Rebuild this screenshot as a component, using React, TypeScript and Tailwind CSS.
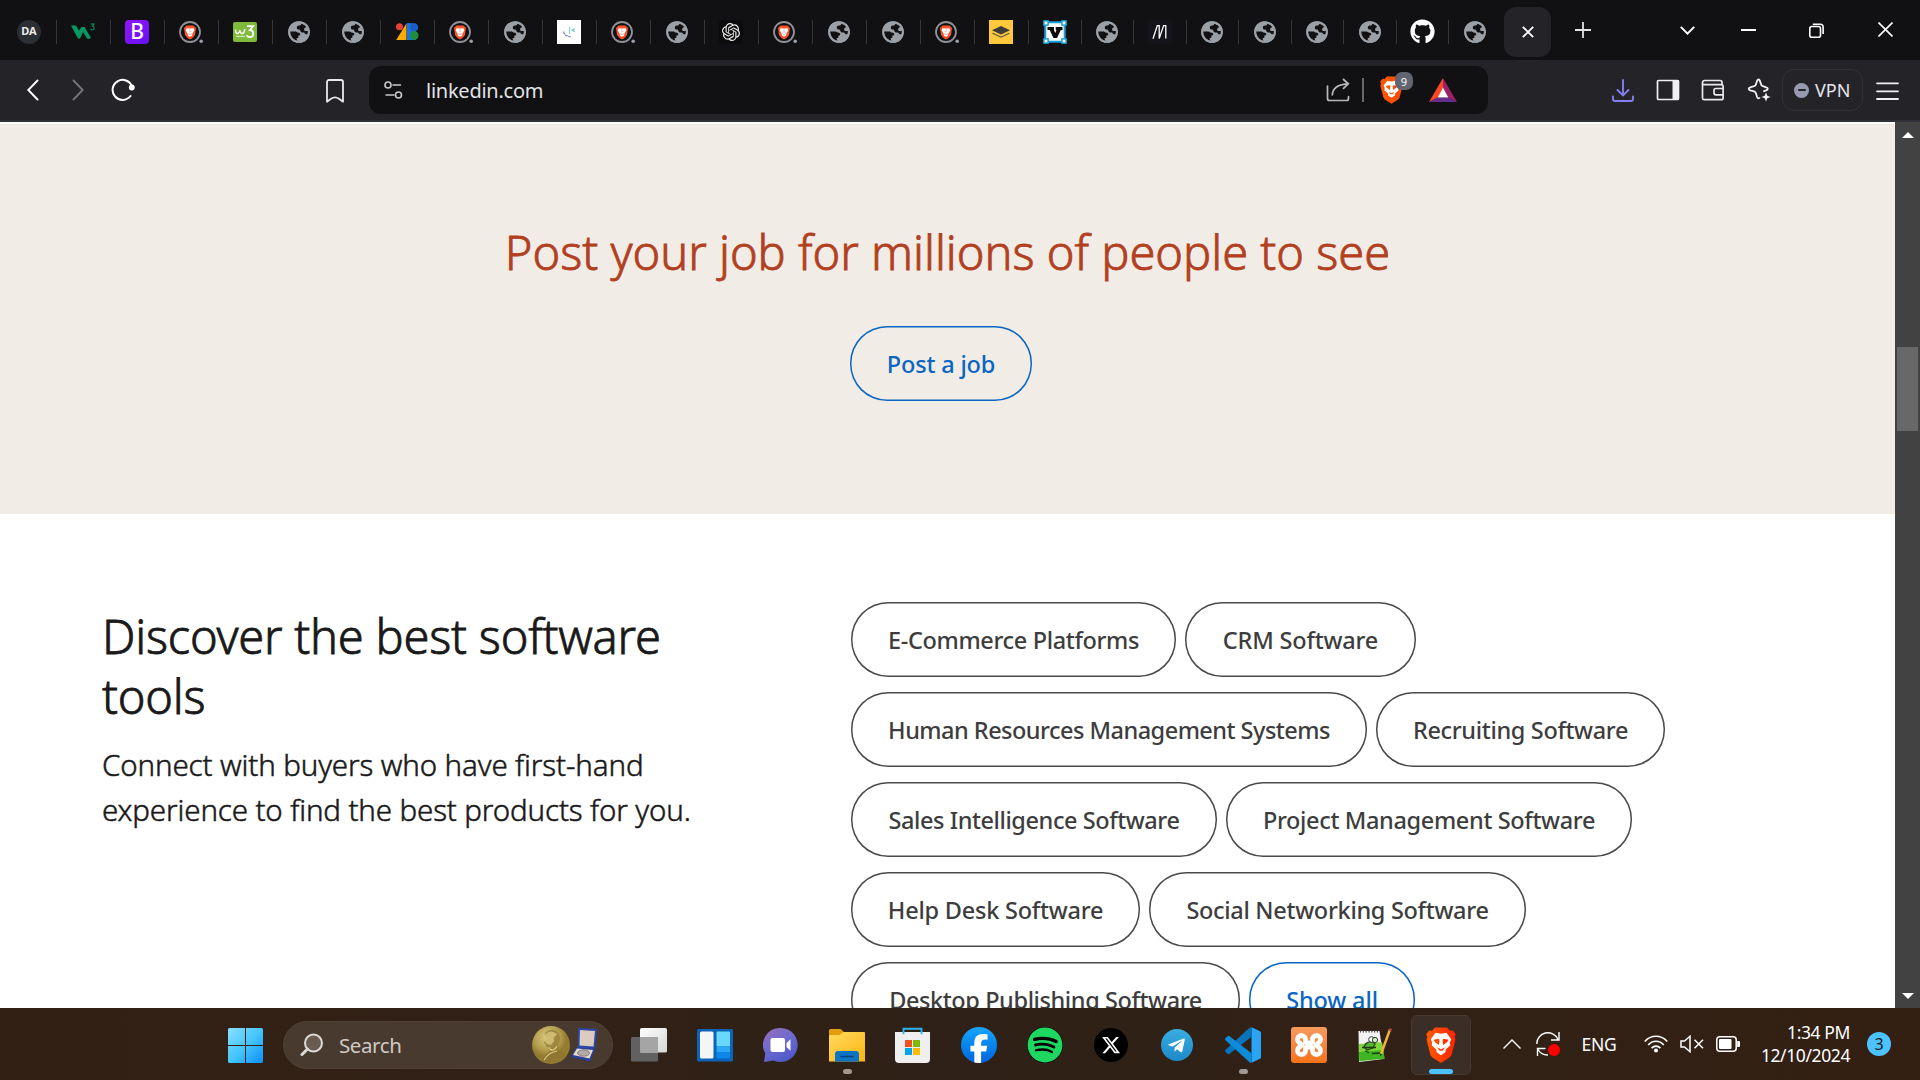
import React from "react";
import { SiOpenai } from "react-icons/si";
import { FaGithub, FaSpotify, FaTelegramPlane } from "react-icons/fa";
import { FaXTwitter, FaFacebookF } from "react-icons/fa6";

/* ---------- tab favicons ---------- */

const Globe = () => (
  <svg className="h-6 w-6" viewBox="0 0 24 24">
    <circle cx="12" cy="12" r="10.8" fill="#9aa0a6" />
    <path
      d="M3 11.4h5.4c1.2 0 1.6.9 2.6 1.2 1.2.3 2.2.5 2.2 1.7 0 1-.6 1.3-1.9 1.4v2.2H9.6c.2 1.2.4 2.3 1.6 3.1C6.5 20.7 3.1 16.8 3 12.2z"
      fill="#111113"
    />
    <path
      d="M14.3 3.7c-.1 1.1-.8 1.900-2 1.900h-.3c-1.300 0-2.200.9-2.200 2.100 0 1.100.9 1.900 2 1.900.9 0 1.300.5 1.500 1.200.3 1 1 1.800 2.300 1.800h.9c.8 0 1.100.5 1.500 1.100.5.700 1.800.8 3.300.3v-2.800c-.5-.2-1-.2-1.500-.2h-1.200c-.9 0-1.500-.7-1.500-1.600 0-.8.600-1.300 1.100-1.600.7-.4.9-.9.8-1.700-.1-1-1.900-2-4.700-2.400z"
      fill="#111113"
    />
    <circle cx="12" cy="12" r="9.800" fill="none" stroke="#9aa0a6" strokeWidth="2" />
  </svg>
);

const BraveTab = () => (
  <svg className="h-6 w-6" viewBox="0 0 24 24">
    <circle cx="11" cy="12" r="10" fill="#111113" stroke="#8f9297" strokeWidth="1.8" />
    <path d="M7.600 5.600h6.800L17 8l-1 7-2.500 3-2.500 1.500L8.500 18 6 15 5 8z" fill="#fb542b" />
    <path d="M7.500 8.200l3.500.4 3.500-.4.8 2-1.800 3.300-.6 2.200-1.900 1-1.900-1-.6-2.200-1.800-3.300z" fill="#fff" />
    <path d="M11 9.500v2.700M9.300 13.800l1.700.7 1.700-.7" stroke="#fb8a68" strokeWidth=".8" fill="none" />
    <circle cx="22.200" cy="21.300" r="1.800" fill="#9aa0a6" />
  </svg>
);

const DA = () => (
  <div className="flex h-6 w-6 items-center justify-center rounded-full bg-[#2b2e33] font-['Noto_Sans',sans-serif] text-[11px] font-bold text-[#ececec]">
    DA
  </div>
);

const W3 = () => (
  <svg className="h-6 w-6" viewBox="0 0 24 24">
    <path d="M0 5.500h4.800l3.200 5 2.500-3.500h3l6.300 10.500c-1 2-3.600 1.800-4.600-.3l-3.200-5.200L9 18.500H7z" fill="#059862" />
    <path d="M19.800 4h3.400l-1.700 2.200c2.300 0 2.300 3.600-.2 3.600-.8 0-1.400-.3-1.700-.9" fill="none" stroke="#059862" strokeWidth="1.100" />
  </svg>
);

const Bootstrap = () => (
  <div className="flex h-6 w-6 items-center justify-center rounded-[4px] bg-linear-to-br from-[#9013fe] to-[#6610f2] font-['Noto_Sans',sans-serif] text-[21px] leading-none font-medium text-white">
    B
  </div>
);

const W3Green = () => (
  <div className="flex h-5 w-6 items-center justify-center rounded-[2px] bg-[#7fba3c]">
    <svg className="h-[18px] w-[22px]" viewBox="0 0 22 18" fill="none" stroke="#fff">
      <path d="M1.500 6.500c0 4 1.500 4.500 3 3.500 1-.7 1.300-2 1.300-3 0 3.500 2.500 4.500 4 2.500.7-1 .9-2 .9-3.500" strokeWidth="1.500" />
      <path d="M13 3.200h6l-3.200 4c4.700.2 4.500 7 .2 7-1.700 0-2.800-.8-3.300-2" strokeWidth="1.800" />
      <path d="M2 13.300h9" strokeWidth="1" strokeOpacity=".8" />
    </svg>
  </div>
);

const ZB = () => (
  <svg className="h-6 w-6" viewBox="0 0 24 24">
    <circle cx="4.500" cy="6.800" r="3.500" fill="#ea4335" />
    <path d="M11.500 3.300v16.700H1.200z" fill="#f9ab00" />
    <path d="M12 3.300h7a4 4 0 0 1 1.800 7.600L21 20h-9z" fill="#1a73e8" />
    <circle cx="18.800" cy="7.200" r="3.900" fill="#174ea6" fillOpacity=".55" />
    <circle cx="19" cy="15.500" r="4.500" fill="#1e8e3e" />
    <path d="M12 3.300h3.200V20H12z" fill="#1a73e8" />
  </svg>
);

const WhiteFace = () => (
  <svg className="h-6 w-6" viewBox="0 0 24 24">
    <rect width="24" height="24" fill="#fff" />
    <path d="M6.500 11.500c.5 3 3 5 7 5.200" fill="none" stroke="#8587c9" strokeWidth="1.300" strokeDasharray="3 .6" />
    <path d="M12.500 7v7" stroke="#8fd0dd" strokeWidth="1.100" />
    <path d="M17.800 8.800l-2.800 1.500 2.800 1.500" fill="none" stroke="#6cc7c9" strokeWidth="1.200" />
  </svg>
);

const GPT = () => (
  <div className="flex h-6 w-6 items-center justify-center rounded-[4px] bg-[#0b0b0b]">
    <SiOpenai className="h-[18px] w-[18px] text-[#ececec]" />
  </div>
);

const YellowStack = () => (
  <svg className="h-6 w-6" viewBox="0 0 24 24">
    <rect width="24" height="24" fill="#ffc83d" />
    <path d="M12 6l9 4.200-9 4.300-9-4.300z" fill="#3f3d38" />
    <path d="M4 12.700l8 3.800 8-3.800 1 .8-9 4.300-9-4.300z" fill="#5a5342" />
  </svg>
);

const VBox = () => (
  <svg className="h-6 w-6" viewBox="0 0 24 24">
    <rect x="2.300" y="2.300" width="19.400" height="19.400" fill="#fff" stroke="#1ba1d8" strokeWidth="2" />
    <path d="M4.500 7H11v3l1.200 3L13.500 10H12.700V7h6.800v3h-1.700l-3.800 8h-3.500l-3.800-8H4.500z" fill="#0b0b0b" />
    <g fill="#fff" stroke="#1ba1d8" strokeWidth="1.500">
      <rect x=".9" y=".9" width="4.200" height="4.200" />
      <rect x="18.900" y=".9" width="4.200" height="4.200" />
      <rect x=".9" y="18.900" width="4.200" height="4.200" />
      <rect x="18.900" y="18.900" width="4.200" height="4.200" />
    </g>
  </svg>
);

const MLogo = () => (
  <svg className="h-6 w-6" viewBox="0 0 24 24" fill="none" stroke="#fff" strokeWidth="1.300">
    <rect width="24" height="24" fill="#15141a" stroke="none" />
    <path d="M5 18.700L9.300 5.600h1.900v13L15.600 5.600h2.200v13" />
  </svg>
);

const Github = () => <FaGithub className="h-[25px] w-[25px] text-white" />;

const wideTabs = [
  DA, W3, Bootstrap, BraveTab, W3Green, Globe, Globe, ZB, BraveTab, Globe,
  WhiteFace, BraveTab, Globe, GPT, BraveTab, Globe, Globe, BraveTab, YellowStack,
];
const narrowTabs = [VBox, Globe, MLogo, Globe, Globe, Globe, Globe, Github];

const Separator = () => <span className="h-6 w-px bg-[#37373b]" />;

function TabStrip() {
  return (
    <div className="flex h-[60px] shrink-0 items-center bg-[#111113] pl-[3px] pt-[3px]">
      {wideTabs.map((Icon, i) => (
        <div key={i} className="flex h-12 w-[54px] shrink-0 items-center">
          <span className="flex flex-1 justify-center pr-[1px]"><Icon /></span>
          <Separator />
        </div>
      ))}
      {narrowTabs.map((Icon, i) => (
        <div key={i} className="flex h-12 w-[52.5px] shrink-0 items-center">
          <span className="flex flex-1 justify-center"><Icon /></span>
          <Separator />
        </div>
      ))}
      <div className="flex w-[52px] justify-center"><Globe /></div>
      <div className="ml-[3px] flex h-[50px] w-[47px] items-center justify-center rounded-xl bg-[#242428]">
        <svg className="h-3 w-3" viewBox="0 0 12 12" stroke="#fff" strokeWidth="1.900">
          <path d="M.8.8l10.400 10.400M11.200.8L.8 11.200" />
        </svg>
      </div>
      <div className="flex w-[62px] justify-center pb-[3px] pl-[2px]">
        <svg className="h-4 w-4" viewBox="0 0 16 16" stroke="#e2e2e4" strokeWidth="1.800">
          <path d="M8 0v16M0 8h16" />
        </svg>
      </div>
      <div className="flex-1" />
      <div className="flex w-[65px] justify-center pb-[3px]">
        <svg className="h-[9px] w-[15px]" viewBox="0 0 15 9" stroke="#fff" strokeWidth="2" fill="none">
          <path d="M.8.9l6.700 6.700L14.200.9" />
        </svg>
      </div>
      <div className="flex w-14 justify-center pb-1"><span className="h-[2px] w-[15px] bg-white" /></div>
      <div className="flex w-20 justify-center pb-[3px]">
        <svg className="h-[15px] w-[15px]" viewBox="0 0 15 15" stroke="#fff" strokeWidth="1.600" fill="none">
          <rect x=".8" y="3.500" width="10.700" height="10.700" rx="2" />
          <path d="M3.800 1.200h7.500a2.800 2.800 0 0 1 2.800 2.800v7" />
        </svg>
      </div>
      <div className="mr-[5px] flex w-[59px] justify-center pb-1">
        <svg className="h-[15px] w-[15px]" viewBox="0 0 15 15" stroke="#fff" strokeWidth="1.600">
          <path d="M.5.5l14 14M14.500.5l-14 14" />
        </svg>
      </div>
    </div>
  );
}

/* ---------- toolbar ---------- */

function BraveLion({ className, from, to, id }: { className: string; from: string; to: string; id: string }) {
  return (
    <svg className={className} viewBox="0 0 30 36">
      <defs>
        <linearGradient id={id} x1="0" x2="1">
          <stop offset="0" stopColor={from} />
          <stop offset="1" stopColor={to} />
        </linearGradient>
      </defs>
      <path
        d="M9 .5h12l3 3.300 2.800-.4L29.700 7l-1 3 .8 2.400-3.800 14.800c-.4 1.500-1.300 2.700-2.500 3.600L15 36l-8.200-5.200c-1.200-.9-2.100-2.100-2.500-3.600L.5 12.400 1.300 10 .3 7l2.900-3.600 2.800.4z"
        fill={`url(#${id})`}
      />
      <path
        d="M9.500 5.800l5.500 1 5.500-1 4.800 6.400-1.400 3.300.3 3.100-4.500 4-.3 2.700-4.400 2.900-4.400-2.900-.3-2.700-4.500-4 .3-3.100-1.400-3.300z"
        fill="#fff"
      />
      <path
        d="M7.500 12.700l4.800-.9 1.200 1-.6 5.100-3.900-2.700zM22.500 12.700l-4.800-.9-1.200 1 .6 5.100 3.900-2.700zM11 20.300l4 1.900 4-1.900-2.500 3.400h-3z"
        fill={`url(#${id})`}
      />
    </svg>
  );
}

function Toolbar() {
  return (
    <div className="flex h-[62px] shrink-0 items-center border-b-2 border-[#313036] bg-[#242428] text-[#f0f0f3]">
      <div className="flex w-[66px] justify-center">
        <svg className="h-[22px] w-3" viewBox="0 0 12 22" fill="none" stroke="#fff" strokeWidth="1.900" strokeLinecap="round">
          <path d="M10.500 1.500L1.300 11l9.200 9.500" />
        </svg>
      </div>
      <div className="flex w-6 justify-center">
        <svg className="h-[22px] w-3" viewBox="0 0 12 22" fill="none" stroke="#74747a" strokeWidth="1.900" strokeLinecap="round">
          <path d="M1.500 1.500L10.700 11l-9.200 9.500" />
        </svg>
      </div>
      <div className="flex w-[65px] justify-center">
        <svg className="h-6 w-6" viewBox="0 0 24 24" fill="none" stroke="#fff" strokeWidth="2" strokeLinecap="round">
          <path d="M21 8.500A10 10 0 1 0 19.500 18" />
          <circle cx="20.800" cy="9.500" r="2.900" fill="#fff" stroke="none" />
        </svg>
      </div>
      <div className="w-[145px]" />
      <div className="flex w-[69px] justify-center">
        <svg className="mt-[1px] h-6 w-[18px]" viewBox="0 0 18 24" fill="none" stroke="#e9e9ec" strokeWidth="1.800" strokeLinejoin="round">
          <path d="M3 1h12a2 2 0 0 1 2 2v19.700l-4-2.900c-2.500-1.700-5.500-1.700-8 0l-4 2.900V3a2 2 0 0 1 2-2z" />
        </svg>
      </div>

      <div className="flex h-12 w-[1119px] shrink-0 items-center rounded-xl bg-[#111113]">
        <div className="flex w-12 justify-center">
          <svg className="h-[18px] w-[19px]" viewBox="0 0 19 18" fill="none" stroke="#c9c9cc" strokeWidth="1.600">
            <circle cx="4" cy="4" r="3" />
            <path d="M9 4h7.500M2 14h8" strokeLinecap="round" />
            <circle cx="14.500" cy="14" r="3" />
          </svg>
        </div>
        <div className="ml-[9px] flex-1 pt-[2px] font-['Noto_Sans',sans-serif] text-[20px] tracking-[-0.25px] text-[#e3e3e6]">linkedin.com</div>
        <div className="flex w-12 justify-center">
          <svg className="h-6 w-6" viewBox="0 0 24 24" fill="none" stroke="#b9b9bc" strokeWidth="1.700">
            <path d="M1.500 8v12.500a2 2 0 0 0 2 2h17a2 2 0 0 0 2-2v-1.800" strokeLinecap="round" />
            <path d="M6.300 17.500c0-7 4.500-11 15-11.700M17 1l5.300 4.800-5.300 5" />
          </svg>
        </div>
        <span className="h-6 w-[2px] bg-[#69696d]" />
        <div className="relative ml-3 flex w-11 pl-1">
          <BraveLion id="shield" className="h-7 w-[23px]" from="#ff5500" to="#ff4a00" />
          <span className="absolute -top-[4px] left-[19px] flex h-[18px] w-[18px] items-center justify-center rounded-[7px] bg-[#62656f] font-['Noto_Sans',sans-serif] text-[11px] leading-none text-white">
            9
          </span>
        </div>
        <div className="mr-[23px] flex w-[45px] justify-center">
          <svg className="h-6 w-7" viewBox="0 0 28 24">
            <path d="M14 0L0 24l9-4.500 5-10z" fill="#ff4724" />
            <path d="M14 0l14 24-9-4.500-5-10z" fill="#9e1f63" />
            <path d="M0 24h28l-9-4.500H9z" fill="#662d91" />
            <path d="M14 9.500l5.300 10H8.700z" fill="#fff" />
          </svg>
        </div>
      </div>

      <div className="w-[112px]" />
      <div className="flex w-[46px] justify-center">
        <svg className="h-[23px] w-[22px]" viewBox="0 0 22 23" fill="none" stroke="#8280f0" strokeWidth="1.900" strokeLinecap="round">
          <path d="M11 1v15M5.500 11l5.500 5.500 5.500-5.500M1 17.500V20a2 2 0 0 0 2 2h16a2 2 0 0 0 2-2v-2.500" />
        </svg>
      </div>
      <div className="flex w-[43px] justify-center">
        <svg className="h-[22px] w-6" viewBox="0 0 24 22">
          <rect x="1.500" y="1.500" width="21" height="19" rx="1" fill="none" stroke="#f0f0f3" strokeWidth="1.700" />
          <rect x="16.500" y="1" width="6.500" height="20" fill="#f0f0f3" />
        </svg>
      </div>
      <div className="flex w-12 justify-center">
        <svg className="h-[22px] w-6" viewBox="0 0 24 22" fill="none" stroke="#e9e9ec" strokeWidth="1.700">
          <path d="M1.500 3v16a1.800 1.800 0 0 0 1.800 1.700h17a1.800 1.800 0 0 0 1.800-1.800V7.500a1.800 1.800 0 0 0-1.800-1.800H3.300A1.800 1.800 0 0 1 1.500 3.500 2 2 0 0 1 3.500 1.500h15.500a2 2 0 0 1 2 2v2" />
          <path d="M22.500 9.500h-7.500a2 2 0 0 0-2 2v2.300a2 2 0 0 0 2 2h7.500" />
        </svg>
      </div>
      <div className="flex w-[43px] justify-center">
        <svg className="h-6 w-6" viewBox="0 0 24 24" fill="none" stroke="#f0f0f3" strokeWidth="1.800" strokeLinejoin="round">
          <path d="M11.500 1.500c.8 0 1.200.7 1.500 1.600l1.100 3.300c.3 1 .8 1.500 1.800 1.800l3.300 1.100c.9.300 1.600.7 1.600 1.500s-.7 1.200-1.600 1.500l-3 1M11.500 1.500c-.8 0-1.200.7-1.500 1.600L8.900 6.400c-.3 1-.8 1.500-1.800 1.800L3.300 9.300c-.9.300-1.600.7-1.600 1.500s.7 1.200 1.600 1.500l3.800 1.100c1 .3 1.500.8 1.800 1.800L10 18.800c.3.900.7 1.600 1.500 1.600s1-.4 1.300-1" />
          <path d="M19 14.500l1.300 3.200 3.200 1.300-3.200 1.300L19 23.500l-1.300-3.200-3.200-1.300 3.200-1.300z" fill="#f0f0f3" stroke="none" />
        </svg>
      </div>
      <div className="ml-[2px] flex h-[42px] w-[81px] items-center gap-[6px] rounded-xl border-[1.500px] border-[#323137] pl-[11px]">
        <span className="flex h-[15px] w-[15px] items-center justify-center rounded-full bg-[#959ab0]">
          <span className="h-[2px] w-2 rounded bg-[#242428]" />
        </span>
        <span className="pb-px font-['Noto_Sans',sans-serif] text-[18px] leading-none text-[#e4e4ee]">VPN</span>
      </div>
      <div className="flex w-[49px] justify-center">
        <svg className="mt-px h-[18px] w-[23px]" viewBox="0 0 23 18" stroke="#f0f0f3" strokeWidth="1.800" strokeLinecap="round">
          <path d="M1 1.300h21M1 9.300h21M1 17h21" />
        </svg>
      </div>
    </div>
  );
}

/* ---------- page ---------- */

const pillBase =
  "flex h-[75px] shrink-0 items-center justify-center rounded-[37px] text-[23.500px] leading-none font-medium whitespace-nowrap ";
const dark = "pt-[3px] text-[#3d3d3d] shadow-[inset_0_0_0_1.5px_#4a4a4a] ";
const blue = "pt-[3px] text-[#0a66c2] shadow-[inset_0_0_0_1.5px_#0a66c2] ";

const rows: { label: string; cls: string }[][] = [
  [
    { label: "E-Commerce Platforms", cls: dark + "w-[325px] tracking-[-0.35px]" },
    { label: "CRM Software", cls: dark + "w-[231px] tracking-[-0.18px]" },
  ],
  [
    { label: "Human Resources Management Systems", cls: dark + "w-[516px] tracking-[-0.52px]" },
    { label: "Recruiting Software", cls: dark + "w-[289px] tracking-[-0.34px]" },
  ],
  [
    { label: "Sales Intelligence Software", cls: dark + "w-[366px] tracking-[-0.42px]" },
    { label: "Project Management Software", cls: dark + "w-[406px] tracking-[-0.35px]" },
  ],
  [
    { label: "Help Desk Software", cls: dark + "w-[289px] tracking-[-0.23px]" },
    { label: "Social Networking Software", cls: dark + "w-[377px] tracking-[-0.3px]" },
  ],
  [
    { label: "Desktop Publishing Software", cls: dark + "w-[389px] tracking-[-0.4px]" },
    { label: "Show all", cls: blue + "w-[166px] tracking-[-0.13px]" },
  ],
];

function Page() {
  return (
    <div className="flex min-h-0 flex-1">
      <main className="flex min-w-0 flex-1 flex-col overflow-hidden bg-white pt-[2px] font-['Noto_Sans','Open_Sans',sans-serif]">
        <section className="flex h-[390px] shrink-0 flex-col items-center bg-[#f1ece6] pt-[98px]">
          <h2 className="text-[47px] leading-[60px] font-light whitespace-nowrap text-[#b24020] [-webkit-text-stroke:0.8px_#b24020]">
            Post your job for millions of people to see
          </h2>
          <button className={pillBase + blue + "mt-[44px] mr-[13px] w-[182px] tracking-[-0.16px]"}>Post a job</button>
        </section>
        <section className="flex shrink-0 pl-[102px]">
          <div className="w-[749px] pt-[92px] text-[#191919]">
            <h2 className="text-[47px] leading-[60px] font-light tracking-[-0.22px] [-webkit-text-stroke:0.8px_#191919]">
              Discover the best software
              <br />
              tools
            </h2>
            <p className="mt-[16px] text-[29.500px] leading-[45px] font-light tracking-[-0.13px] [-webkit-text-stroke:0.5px_#191919]">
              Connect with buyers who have first-hand
              <br />
              experience to find the best products for you.
            </p>
          </div>
          <div className="flex flex-col gap-[15px] pt-[88px]">
            {rows.map((row, i) => (
              <div key={i} className="flex gap-[9px]">
                {row.map((p) => (
                  <button key={p.label} className={pillBase + p.cls}>{p.label}</button>
                ))}
              </div>
            ))}
          </div>
        </section>
      </main>
      <div className="flex w-[25px] flex-col items-center bg-[#424242]">
        <svg className="mt-[10px] h-[6px] w-3" viewBox="0 0 12 6"><path d="M6 0l6 6H0z" fill="#fff" /></svg>
        <div className="mt-[209px] h-[84px] w-[21px] bg-[#686868]" />
        <div className="flex-1" />
        <svg className="mb-[9px] h-[6px] w-3" viewBox="0 0 12 6"><path d="M0 0h12L6 6z" fill="#fff" /></svg>
      </div>
    </div>
  );
}

/* ---------- taskbar ---------- */

const TaskView = () => (
  <svg className="h-9 w-9" viewBox="0 0 36 36">
    <defs>
      <linearGradient id="tv" x1="0" y1="0" x2="1" y2="1"><stop offset="0" stopColor="#fff" /><stop offset="1" stopColor="#d6d6d6" /></linearGradient>
    </defs>
    <rect x="0" y="10" width="27" height="24.500" rx="1.500" fill="#616161" />
    <rect x="9" y="1" width="27" height="24.500" rx="1.500" fill="url(#tv)" />
    <path d="M9 10h18v15.500H9z" fill="#a5a5a5" />
  </svg>
);
const Widgets = () => (
  <svg className="h-9 w-9" viewBox="0 0 36 36">
    <rect x="0" y="2" width="36" height="32.500" rx="1.500" fill="#0d63b5" />
    <rect x="3" y="4.500" width="13.500" height="27" rx="1.500" fill="#f5f5f5" />
    <rect x="19.500" y="4.500" width="13.500" height="15" rx="1" fill="#69d8ff" />
    <rect x="19.500" y="19.500" width="13.500" height="6" fill="#2aa8f5" />
    <rect x="19.500" y="25.500" width="13.500" height="6" fill="#0d86ea" />
  </svg>
);
const Chat = () => (
  <svg className="h-9 w-9" viewBox="0 0 36 36">
    <defs>
      <linearGradient id="ch" x1="0" y1="0" x2=".6" y2="1"><stop offset="0" stopColor="#9a6bb5" /><stop offset=".5" stopColor="#6f6bd0" /><stop offset="1" stopColor="#5059c9" /></linearGradient>
    </defs>
    <path d="M17.500 1a17 17 0 1 1-7 32.400L1 35l1.300-8.500A17 17 0 0 1 17.500 1z" fill="url(#ch)" />
    <rect x="7.500" y="11" width="14.500" height="14" rx="2" fill="#fff" />
    <path d="M23.500 16l4-3.800v11.500l-4-3.800z" fill="#fff" />
  </svg>
);
const Explorer = () => (
  <svg className="h-9 w-9" viewBox="0 0 36 36">
    <defs>
      <linearGradient id="ex" x1="0" y1="0" x2="1" y2="1"><stop offset="0" stopColor="#ffd95e" /><stop offset="1" stopColor="#fbb614" /></linearGradient>
    </defs>
    <path d="M0 3.500A1.500 1.500 0 0 1 1.500 2h10l4 3.500V9H0z" fill="#e29c0c" />
    <path d="M0 8h10.500l4-3H35a1 1 0 0 1 1 1v28.500H0z" fill="url(#ex)" />
    <path d="M6 34.500V27a3 3 0 0 1 3-3h18a3 3 0 0 1 3 3v7.500z" fill="#0c74c4" />
    <path d="M11.500 29.500h13" stroke="#083f78" strokeWidth="1.500" />
  </svg>
);
const Store = () => (
  <svg className="h-9 w-9" viewBox="0 0 36 36">
    <path d="M0 5h35v27a4 4 0 0 1-4 4H4a4 4 0 0 1-4-4z" fill="#efefef" />
    <path d="M8.500 7.300V1.800h18v5.500" fill="none" stroke="#2cb5f0" strokeWidth="1.900" />
    <path d="M10 13h7v7h-7z" fill="#f25022" />
    <path d="M18 13h7v7h-7z" fill="#7fba00" />
    <path d="M10 21h7v7h-7z" fill="#00a4ef" />
    <path d="M18 21h7v7h-7z" fill="#ffb900" />
  </svg>
);
const Facebook = () => (
  <div className="flex h-9 w-9 items-end justify-center overflow-hidden rounded-full bg-linear-to-b from-[#1aa6fb] to-[#0463de]">
    <FaFacebookF className="-mb-px h-[30px] w-[26px] text-white" />
  </div>
);
const Spotify = () => (
  <div className="flex h-9 w-9 items-center justify-center rounded-full bg-black">
    <FaSpotify className="h-9 w-9 text-[#1ed760]" />
  </div>
);
const XLogo = () => (
  <div className="flex h-[34px] w-[34px] items-center justify-center rounded-full bg-black">
    <FaXTwitter className="h-5 w-5 text-white" />
  </div>
);
const Telegram = () => (
  <div className="flex h-8 w-8 items-center justify-center rounded-full bg-linear-to-b from-[#37aee2] to-[#1e88c9]">
    <FaTelegramPlane className="mr-[2px] h-[19px] w-[19px] text-white" />
  </div>
);
const VSCode = () => (
  <svg className="h-9 w-9" viewBox="0 0 36 36">
    <path d="M26.500.3L35 4.200a1.800 1.800 0 0 1 1 1.600v24.400a1.800 1.800 0 0 1-1 1.600l-8.500 4z" fill="#2aa4f4" />
    <path d="M26.500.3v9.500L4.300 26.900a1.500 1.500 0 0 1-1.900-.1L.5 25a1.500 1.500 0 0 1 0-2.200L24.500.8a2.200 2.200 0 0 1 2-.5z" fill="#0873bd" />
    <path d="M26.500 35.700v-9.500L4.300 9.100a1.500 1.500 0 0 0-1.900.1L.5 11a1.500 1.500 0 0 0 0 2.200l24 22a2.200 2.200 0 0 0 2 .5z" fill="#0d8ad8" />
  </svg>
);
const Xampp = () => (
  <div className="flex h-9 w-9 items-center justify-center rounded-[3px] bg-linear-to-b from-[#f79a5c] to-[#f47216]">
    <svg className="h-[26px] w-[30px]" viewBox="0 0 30 26" fill="none" stroke="#fff" strokeWidth="4.800" strokeLinejoin="round" strokeLinecap="round">
      <path d="M11.500 9.500V7.500a4 4 0 1 0-5.500 3.700l2 1.800-2 1.800a4 4 0 1 0 5.500 3.700v-2c0-2 7-2 7 0v2a4 4 0 1 0 5.500-3.700l-2-1.800 2-1.800a4 4 0 1 0-5.500-3.700v2c0 2-7 2-7 0z" />
    </svg>
  </div>
);
const NotepadPP = () => (
  <svg className="h-9 w-9" viewBox="0 0 36 36">
    <path d="M1.500 4h21l4 28-24.500 3z" fill="#f2f2f2" />
    <path d="M2 17l23-2 2.500 16.500L2.300 34z" fill="#7ed63a" />
    <path d="M2 25l24.500-2 1 8.500L2.300 34z" fill="#3cb521" />
    <path d="M3 4.500h18" stroke="#555" strokeWidth="2" strokeDasharray="1.200 1.600" />
    <path d="M7 20c1-4 5-6 9-5l2 2-2 4-6 2z" fill="#58b336" stroke="#1e4a12" strokeWidth="1.200" />
    <circle cx="14.500" cy="12.500" r="2.800" fill="#fff" stroke="#333" />
    <circle cx="18" cy="13" r="2.600" fill="#d8f5c8" stroke="#333" />
    <path d="M5 20.500h14M8 24l4 1.500M15 26.500l8-.5" stroke="#1e3a12" strokeWidth="1.300" />
    <path d="M24 27L33 2.500" stroke="#f0b43c" strokeWidth="2.500" />
    <path d="M33 4l1-2.500" stroke="#b53a4a" strokeWidth="2.500" />
    <path d="M23 29.500l.3-3 1.700.7z" fill="#222" />
  </svg>
);

type TaskApp = { Icon: React.FC; open?: boolean };
const apps: TaskApp[] = [
  { Icon: TaskView }, { Icon: Widgets }, { Icon: Chat }, { Icon: Explorer, open: true }, { Icon: Store },
  { Icon: Facebook }, { Icon: Spotify }, { Icon: XLogo }, { Icon: Telegram }, { Icon: VSCode, open: true },
  { Icon: Xampp }, { Icon: NotepadPP },
];

const Medal = () => (
  <svg className="h-[38px] w-[38px]" viewBox="0 0 38 38">
    <defs>
      <radialGradient id="md" cx=".4" cy=".3"><stop offset="0" stopColor="#dccb83" /><stop offset=".7" stopColor="#b39b4b" /><stop offset="1" stopColor="#947b30" /></radialGradient>
    </defs>
    <circle cx="19" cy="19" r="19" fill="url(#md)" />
    <path d="M13 7c3-4 11-5 14 1 1.500 4 1 7-1 10l1 6c4 2 6 4 5 7-6 6-15 7-22 3 2-4 5-7 9-10l-.500-3h-4l-1-3-1.500-1 2.500-5z" fill="#8a7330" fillOpacity=".6" />
    <path d="M14 8c3-3 9-3 11 1-3 1-4 3-3 6l-3 4-4-1-2-3z" fill="#d8c57a" fillOpacity=".8" />
    <path d="M18 23c2 2 5 1 7-3M12 34c3-5 7-8 13-9" stroke="#e0cf8b" strokeWidth="1.200" fill="none" />
  </svg>
);
const MedalCase = () => (
  <svg className="h-9 w-7" viewBox="0 0 28 36">
    <path d="M8 1l19 1-2 20-17-1z" fill="#2b47a8" />
    <path d="M10 3l15 1-1.500 15.500L9.500 18.500z" fill="#dccbc0" />
    <path d="M6 20.500l19 1.500-5 12.500L1 30z" fill="#27409d" />
    <path d="M7 21.500l16 1.500-3.500 8.500L3 28z" fill="#e6d8ca" />
    <ellipse cx="13.500" cy="26" rx="6" ry="3.200" fill="#b3aaa4" stroke="#77706c" strokeWidth=".8" />
  </svg>
);

function Taskbar() {
  return (
    <div className="flex h-[72px] shrink-0 items-center bg-linear-to-r from-[#332014] via-[#2f2117] to-[#332013] font-['Noto_Sans',sans-serif] text-white">
      <div className="ml-[212px] flex w-[66px] justify-center">
        <svg className="mt-[3px] h-[35px] w-[35px]" viewBox="0 0 35 35">
          <defs>
            <linearGradient id="win" x1="0" y1="0" x2="1" y2="1"><stop offset="0" stopColor="#8be0ff" /><stop offset=".5" stopColor="#45c6fd" /><stop offset="1" stopColor="#0c8ffb" /></linearGradient>
          </defs>
          <path d="M1.500 0H17v17H0V1.500A1.500 1.500 0 0 1 1.500 0zM18 0h15.500A1.500 1.500 0 0 1 35 1.500V17H18zM0 18h17v17H1.500A1.500 1.500 0 0 1 0 33.500zM18 18h17v15.500a1.500 1.500 0 0 1-1.500 1.500H18z" fill="url(#win)" />
        </svg>
      </div>
      <div className="ml-[5px] mt-[2px] flex h-12 w-[330px] items-center rounded-full border border-[#4f4136] bg-[#483a2e] pr-[14px] pl-[16px]">
        <svg className="h-6 w-6" viewBox="0 0 24 24" fill="none" stroke="#dcd9d6">
          <circle cx="13.500" cy="10" r="8.500" strokeWidth="2" fill="#6a5b50" />
          <path d="M7.500 16L2 21.500" strokeWidth="3" strokeLinecap="round" />
        </svg>
        <span className="ml-[15px] flex-1 text-[20.500px] leading-none tracking-[-0.4px] text-[#cfcac6]">Search</span>
        <Medal />
        <MedalCase />
      </div>
      <div className="ml-[3px] flex">
        {apps.map(({ Icon, open }, i) => (
          <div key={i} className="flex h-[72px] w-[66px] flex-col items-center">
            <div className="mt-[19px] flex h-9 items-center justify-center"><Icon /></div>
            {open && <span className="mt-[6px] h-[5px] w-[9px] rounded-full bg-[#a09891]" />}
          </div>
        ))}
        <div className="flex h-[72px] w-[66px] justify-center">
          <div className="mt-[7px] flex h-[60px] w-[60px] flex-col items-center rounded-[6px] border border-[#473a31] bg-[#3b2e26]">
            <BraveLion id="task" className="mt-[11px] h-9 w-[30px]" from="#ff5a00" to="#ff2200" />
            <span className="mt-[6px] h-[5px] w-6 rounded-full bg-[#4cc2ff]" />
          </div>
        </div>
      </div>
      <div className="ml-[18px] flex w-[40px] justify-center">
        <svg className="h-[10px] w-[18px]" viewBox="0 0 18 10" fill="none" stroke="#fff" strokeWidth="1.400"><path d="M.5 9.500L9 1l8.500 8.500" /></svg>
      </div>
      <div className="flex w-[31px] justify-center">
        <svg className="h-6 w-6" viewBox="0 0 24 24" fill="none" stroke="#fff" strokeWidth="1.400">
          <path d="M.8 12a11 11 0 0 1 21-4.800M23 0v8h-8M1.500 24v-7.500h8M2 17.500A11 11 0 0 0 12 23" />
          <circle cx="18" cy="18" r="6" fill="#f00" stroke="none" />
        </svg>
      </div>
      <div className="flex w-[73px] justify-center pr-[1px] text-[17.500px] tracking-[-0.3px]">ENG</div>
      <div className="flex w-[40px] justify-center">
        <svg className="h-[18px] w-6" viewBox="0 0 24 18" fill="none" stroke="#fff" strokeWidth="1.700">
          <path d="M.8 6.500c6-7 16.400-7 22.400 0M4.200 10c4.400-5 11.200-5 15.600 0M7.600 13.200c2.600-2.800 6.200-2.800 8.800 0" />
          <circle cx="12" cy="15.500" r="2" fill="#fff" stroke="none" />
        </svg>
      </div>
      <div className="flex w-[31px] justify-center">
        <svg className="h-[18px] w-6" viewBox="0 0 24 18" fill="none" stroke="#fff" strokeWidth="1.500">
          <path d="M1 6h3.500L10 1.300v15.400L4.500 12H1zM14.500 4.800l8.500 8.500M23 4.800l-8.500 8.500" />
        </svg>
      </div>
      <div className="flex w-[42px] justify-center">
        <svg className="h-4 w-6" viewBox="0 0 24 16">
          <rect x=".8" y=".8" width="19.400" height="14.400" rx="3" fill="none" stroke="#fff" strokeWidth="1.500" />
          <rect x="3" y="3" width="12.500" height="10" rx="1" fill="#fff" />
          <path d="M21.200 5H23a1 1 0 0 1 1 1v4a1 1 0 0 1-1 1h-1.800z" fill="#fff" />
        </svg>
      </div>
      <div className="w-[102px] pr-[1px] text-right text-[17.500px] leading-[23px]">
        <div className="tracking-[-0.4px]">1:34 PM</div>
        <div className="tracking-[-0.4px]">12/10/2024</div>
      </div>
      <div className="ml-4 flex h-6 w-6 items-center justify-center rounded-full bg-[#4cc2ff] text-[16px] leading-none text-[#1a1a1a]">3</div>
    </div>
  );
}

export default function App() {
  return (
    <div className="flex h-[1080px] w-[1920px] flex-col overflow-hidden bg-white">
      <TabStrip />
      <Toolbar />
      <Page />
      <Taskbar />
    </div>
  );
}
